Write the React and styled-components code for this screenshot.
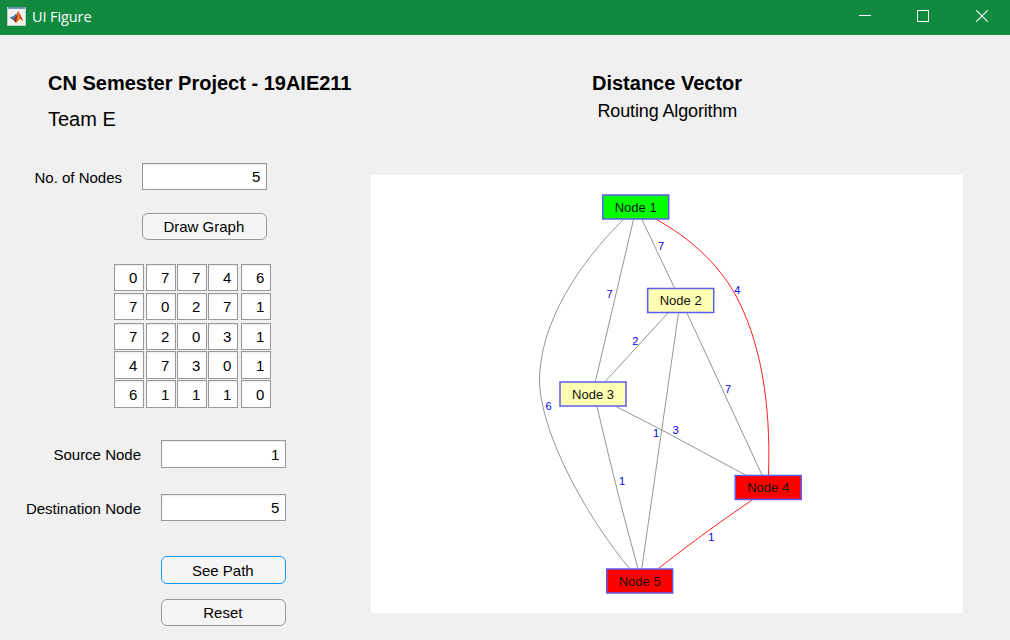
import React from "react";
import styled, { createGlobalStyle } from "styled-components";

const GlobalStyle = createGlobalStyle`
  * { box-sizing: border-box; }
  body { margin: 0; background: #f0f0f0; overflow: hidden; }
`;

const Window = styled.div`
  width: 1010px;
  height: 640px;
  display: flex;
  flex-direction: column;
  background: #f0f0f0;
  color: #000;
  font-family: "Liberation Sans", Arial, sans-serif;
  font-size: 15px;
`;

const TitleBar = styled.header`
  flex: none;
  height: 35px;
  display: flex;
  align-items: center;
  justify-content: space-between;
  padding: 0 22px 3px 7px;
  background: #11893f;
  color: #fff;
`;

const AppTitle = styled.div`
  display: flex;
  align-items: center;
  gap: 6px;
  font: 14.5px/20px "Open Sans", "Noto Sans", sans-serif;
  letter-spacing: -0.1px;
`;

const TitleText = styled.span`
  padding-top: 1px;
`;

const WindowControls = styled.div`
  display: flex;
  gap: 46px;
  svg { display: block; }
`;

const Body = styled.main`
  display: flex;
  flex: 1;
  min-height: 0;
`;

const Controls = styled.section`
  width: 371px;
  display: flex;
  flex-direction: column;
`;

const Output = styled.section`
  width: 592px;
  display: flex;
  flex-direction: column;
`;

const Heading = styled.h1`
  margin: ${(p) => p.$margin};
  font-size: 20px;
  line-height: 24px;
  font-weight: bold;
  white-space: nowrap;
`;

const Subheading = styled.p`
  margin: ${(p) => p.$margin};
  font-size: ${(p) => p.$size}px;
  line-height: 24px;
  letter-spacing: ${(p) => p.$tracking || 0}px;
  white-space: nowrap;
`;

const Field = styled.label`
  display: flex;
  width: ${(p) => p.$width}px;
  margin-top: ${(p) => p.$top}px;
  justify-content: flex-end;
  gap: 20px;
  line-height: 30px;
  height: ${(p) => p.$height || 27}px;
  white-space: nowrap;
`;

const NumberBox = styled.output`
  width: ${(p) => p.$width || 125}px;
  height: ${(p) => p.$height || 27}px;
  padding-right: 5.6px;
  border: 1px solid #999;
  background: #fff;
  box-shadow: inset 0 1px 2px rgba(0, 0, 0, 0.09);
  line-height: ${(p) => (p.$height || 27) - 1}px;
  text-align: right;
`;

const Button = styled.button`
  width: 125px;
  height: ${(p) => p.$height || 27}px;
  margin: ${(p) => p.$top}px 0 0 ${(p) => p.$left}px;
  padding: 0 1.4px 0 0;
  border: 1px solid ${(p) => (p.$focused ? "#0f9bff" : "#999")};
  border-radius: 6px;
  background: #f5f5f5;
  color: #000;
  font: inherit;
`;

const Matrix = styled.div`
  display: grid;
  grid-template-columns: 32px 31px 31px 33px 30px;
  grid-template-rows: 29px 30px 28px 29px 28px;
  margin: 24px 0 0 114px;
`;

const Graph = styled.svg`
  display: block;
  width: 592px;
  height: 438px;
  margin-top: 52px;
  background: #fff;
`;

const Edge = styled.path`
  fill: none;
  stroke: ${(p) => (p.$active ? "#ff2020" : "#888")};
  stroke-width: ${(p) => (p.$active ? 1 : 0.9)};
`;

const NodeBox = styled.rect`
  fill: ${(p) => p.$fill};
  stroke: #5c5cf0;
  stroke-width: 1.5;
`;

const NodeText = styled.text`
  font-size: 13px;
  text-anchor: middle;
  fill: #111;
`;

const Weight = styled.text`
  font-size: 11px;
  text-anchor: middle;
  fill: #0000f5;
`;

const matrix = [
  [0, 7, 7, 4, 6],
  [7, 0, 2, 7, 1],
  [7, 2, 0, 3, 1],
  [4, 7, 3, 0, 1],
  [6, 1, 1, 1, 0],
];
const rowHeights = [27, 27, 27, 28, 28];

const nodes = [
  { name: "Node 1", x: 635.7, y: 207, fill: "#00ff00" },
  { name: "Node 2", x: 680.7, y: 300.5, fill: "#ffffb3" },
  { name: "Node 3", x: 593, y: 394, fill: "#ffffb3" },
  { name: "Node 4", x: 768.2, y: 487.5, fill: "#ff0000" },
  { name: "Node 5", x: 639.7, y: 581, fill: "#ff0000" },
];

const edges = [
  { d: "M623.5 219.5C580 262 539 323 539.5 382C540 390 540.5 396 542 402C551 450 589 520 629.5 568.5", w: 6, x: 548.5, y: 410 },
  { d: "M633.5 219.5L595.4 381.5", w: 7, x: 609.5, y: 298.4 },
  { d: "M642 219.5L674.5 288", w: 7, x: 661, y: 250.4 },
  { d: "M668 313L605.2 381.5", w: 2, x: 635.3, y: 345 },
  { d: "M678.5 313Q667.5 390 661.7 430L641.8 568.5", w: 1, x: 656, y: 437 },
  { d: "M687 313L724.5 394L762 475", w: 7, x: 728, y: 392.6 },
  { d: "M616 406.5L661.7 430L745.5 475", w: 3, x: 675.5, y: 434.4 },
  { d: "M597 406.5Q619 501 638 568.5", w: 1, x: 622, y: 485.4 },
  { d: "M656.5 219.5C690 238 718 264 735 294C760 340 771 400 768.5 475", w: 4, x: 737.3, y: 294, active: true },
  { d: "M752 500Q698 537 658.5 568.5", w: 1, x: 711.3, y: 541, active: true },
];

function MatlabIcon() {
  return (
    <svg width="19" height="19" viewBox="0 0 19 19">
      <rect x="0.5" y="0.5" width="18" height="18" fill="#f3f3f3" stroke="#b9cdbf" />
      <path d="M1 1h17" stroke="#3c78a8" strokeWidth="1.4" />
      <path d="M2.5 10.8L6.5 9L9.5 6L8.5 11L6 13Z" fill="#3f7fb0" />
      <path d="M6 12.8L9 9L11 4L12.5 8L10.8 13L9 16Z" fill="#8f3428" />
      <path d="M11 4L12.4 6L16.2 14L13.2 12L9 16L10.2 10Z" fill="#ee7a1e" />
      <path d="M12 5.2L13.6 11.6L16.2 14Z" fill="#b3301a" />
    </svg>
  );
}

export default function App() {
  return (
    <>
      <GlobalStyle />
      <Window>
        <TitleBar>
          <AppTitle>
            <MatlabIcon />
            <TitleText>UI Figure</TitleText>
          </AppTitle>
          <WindowControls>
            <svg width="12" height="12" viewBox="0 0 12 12"><path d="M0 5.5H12" stroke="#fff" /></svg>
            <svg width="12" height="12" viewBox="0 0 12 12"><rect x=".5" y=".5" width="11" height="11" fill="none" stroke="#fff" /></svg>
            <svg width="13" height="12" viewBox="0 0 13 12"><path d="M1.3 .3L12.7 11.7M12.7 .3L1.3 11.7" stroke="#fff" strokeWidth="1.1" /></svg>
          </WindowControls>
        </TitleBar>
        <Body>
          <Controls>
            <Heading $margin="36px 0 0 48px">CN Semester Project - 19AIE211</Heading>
            <Subheading $margin="12px 0 0 48px" $size={20}>Team E</Subheading>
            <Field $width={267} $top={32}>
              No. of Nodes
              <NumberBox>5</NumberBox>
            </Field>
            <Button $top={23} $left={142}>Draw Graph</Button>
            <Matrix>
              {matrix.map((row, r) =>
                row.map((value, c) => (
                  <NumberBox key={`${r}-${c}`} $width={30} $height={rowHeights[r]}>{value}</NumberBox>
                ))
              )}
            </Matrix>
            <Field $width={286} $top={32} $height={28}>
              Source Node
              <NumberBox $height={28}>1</NumberBox>
            </Field>
            <Field $width={286} $top={26}>
              Destination Node
              <NumberBox>5</NumberBox>
            </Field>
            <Button $top={35} $left={161} $height={28} $focused>See Path</Button>
            <Button $top={15} $left={161}>Reset</Button>
          </Controls>
          <Output>
            <Heading $margin="36px 0 0 221px">Distance Vector</Heading>
            <Subheading $margin="4px 0 0 226.5px" $size={18} $tracking={-0.14}>Routing Algorithm</Subheading>
            <Graph viewBox="371 175 592 438">
              {edges.map((e, i) => (
                <Edge key={i} d={e.d} $active={e.active} />
              ))}
              {nodes.map((n) => (
                <g key={n.name}>
                  <NodeBox x={n.x - 33} y={n.y - 12} width="66" height="24" $fill={n.fill} />
                  <NodeText x={n.x} y={n.y + 4.9}>{n.name}</NodeText>
                </g>
              ))}
              {edges.map((e, i) => (
                <Weight key={i} x={e.x} y={e.y}>{e.w}</Weight>
              ))}
            </Graph>
          </Output>
        </Body>
      </Window>
    </>
  );
}
